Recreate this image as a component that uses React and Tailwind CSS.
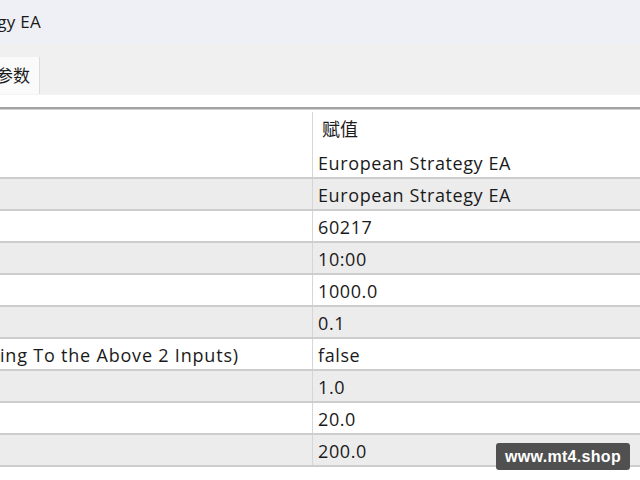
const FONT = { fontFamily: '"Open Sans", "Noto Sans", "Noto Sans CJK SC", sans-serif' };

const rows = [
  { name: '', value: 'European Strategy EA' },
  { name: '', value: 'European Strategy EA' },
  { name: 'Magic Number 1', value: '60217', clip: 3 },
  { name: '', value: '10:00' },
  { name: '', value: '1000.0' },
  { name: '', value: '0.1' },
  { name: 'ing To the Above 2 Inputs)', value: 'false', plain: true },
  { name: '', value: '1.0' },
  { name: '', value: '20.0' },
  { name: '', value: '200.0' },
];

export default function App() {
  return (
    <div className="w-[640px] h-[480px] overflow-hidden bg-white text-[#1a1a1a] relative" style={FONT}>
      {/* title bar */}
      <div className="h-[44px] bg-[#eff0f5] flex items-center">
        <div className="w-[41px] overflow-hidden flex justify-end whitespace-nowrap text-[17px] tracking-[0.3px] pb-[1px]">
          <span className="shrink-0">European Strategy EA</span>
        </div>
      </div>
      {/* tab strip */}
      <div className="h-[50px] bg-[#f0f0f0] flex items-end">
        <div className="w-[40px] h-[37px] bg-[#fafafa] border-r border-[#dcdcdc] flex items-center justify-end pr-[9px] text-[17px] overflow-hidden">
          <span className="whitespace-nowrap shrink-0">输入参数</span>
        </div>
      </div>
      <div className="h-[13px] bg-white border-t border-[#f4f4f4]" />
      <div className="h-[3px] bg-[#a3a3a3] border-b border-[#d0d0d0]" />
      {/* header */}
      <div className="flex h-[37px] bg-white">
        <div className="w-[313px] border-r border-[#d6d6d6] mt-[2px]" />
        <div className="flex items-center pl-[9px] pt-[1px] text-[18px]">赋值</div>
      </div>
      {rows.map((r, i) => (
        <div
          key={i}
          className={`flex h-[32px] border-b-2 border-[#cdcdcd] ${i % 2 === 1 ? 'bg-[#ececec]' : 'bg-white'}`}
        >
          <div className="w-[313px] border-r border-[#d6d6d6] flex items-center pt-[3px] text-[18px] tracking-[0.8px]">
            {r.plain ? (
              <span className="whitespace-nowrap">{r.name}</span>
            ) : r.clip ? (
              <div className="overflow-hidden flex justify-end whitespace-nowrap" style={{ width: r.clip }}>
                <span className="shrink-0">{r.name}</span>
              </div>
            ) : null}
          </div>
          <div className="flex items-center pl-[5px] pt-[3px] text-[18px] tracking-[0.6px] whitespace-nowrap">{r.value}</div>
        </div>
      ))}
      {/* watermark */}
      <div className="absolute left-[496px] top-[443px] w-[134px] h-[27px] rounded-[3px] bg-[#505050] flex items-center justify-center text-white text-[16px] font-semibold tracking-[0.3px]" style={{ fontFamily: '"Liberation Sans", Arial, sans-serif' }}>
        www.mt4.shop
      </div>
    </div>
  );
}
